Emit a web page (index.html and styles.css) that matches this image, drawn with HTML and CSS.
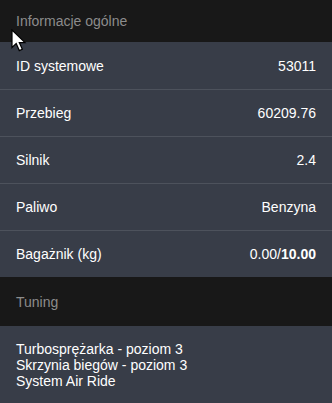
FILE: index.html
```html
<!DOCTYPE html>
<html lang="pl">
<head>
<meta charset="utf-8">
<link rel="stylesheet" href="styles.css">
</head>
<body>
<div class="panel">
  <div class="section-title">Informacje ogólne</div>
  <div class="rows">
    <div class="row"><span>ID systemowe</span><span>53011</span></div>
    <div class="row"><span>Przebieg</span><span>60209.76</span></div>
    <div class="row"><span>Silnik</span><span>2.4</span></div>
    <div class="row"><span>Paliwo</span><span>Benzyna</span></div>
    <div class="row"><span>Bagażnik (kg)</span><span>0.00/<b>10.00</b></span></div>
  </div>
  <div class="section-title tuning-title">Tuning</div>
  <div class="tuning">
    <div>Turbosprężarka - poziom 3</div>
    <div>Skrzynia biegów - poziom 3</div>
    <div>System Air Ride</div>
  </div>
</div>
<svg class="cursor" width="16" height="23" viewBox="0 0 16 23">
  <path d="M1 1 L1 18.5 L5.2 14.6 L8.3 21.6 L11.3 20.3 L8.3 13.6 L14 13.6 Z" fill="#fff" stroke="#000" stroke-width="1.2" stroke-linejoin="miter"/>
</svg>
</body>
</html>
```
FILE: styles.css
```css
html, body {
  margin: 0;
  padding: 0;
  background: #181818;
}
body {
  font-family: "Liberation Sans", Arial, sans-serif;
  font-size: 14px;
  color: #ffffff;
  position: relative;
  height: 403px;
  overflow: hidden;
}
.panel {
  display: flex;
  flex-direction: column;
}
.section-title {
  height: 42px;
  display: flex;
  align-items: center;
  padding: 0 16px;
  color: #8c8c8c;
  background: #181818;
}
.tuning-title {
  height: 49px;
}
.rows {
  background: #383d48;
  display: flex;
  flex-direction: column;
}
.row {
  height: 46px;
  display: flex;
  align-items: center;
  justify-content: space-between;
  padding: 0 16px;
  border-top: 1px solid #4d525c;
}
.row:first-child {
  height: 47px;
  border-top: none;
}
.row b {
  font-weight: bold;
}
.tuning {
  background: #383d48;
  padding: 15px 16px 20px;
  line-height: 16px;
  min-height: 77px;
  box-sizing: border-box;
}
.cursor {
  position: absolute;
  left: 11px;
  top: 29px;
}
```
